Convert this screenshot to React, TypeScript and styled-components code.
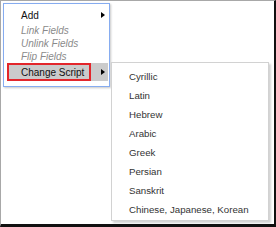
import styled, { createGlobalStyle } from "styled-components";

const GlobalStyle = createGlobalStyle`
  html, body {
    margin: 0;
    padding: 0;
    background: #fff;
  }
  body {
    font-family: "Liberation Sans", Arial, sans-serif;
  }
`;

const Frame = styled.div`
  box-sizing: border-box;
  width: 276px;
  height: 227px;
  border-style: solid;
  border-width: 1px 2px 3px 1px;
  border-color: #a8a8a8 #111 #111 #a8a8a8;
  padding: 2px 0 0 2px;
  display: flex;
  align-items: flex-start;
  gap: 1px;
  background: #fff;
`;

const Menu = styled.ul`
  box-sizing: border-box;
  list-style: none;
  margin: 0;
  width: 107px;
  padding: 2px 1px 5px 3px;
  border: 1px solid #86acf0;
  box-shadow: 1px 1px 2px rgba(0, 0, 0, 0.22);
  background: #fff;
`;

const Item = styled.li<{ $disabled?: boolean; $tall?: boolean; $active?: boolean }>`
  display: flex;
  align-items: center;
  justify-content: space-between;
  height: ${(p) => (p.$tall ? 18 : 13)}px;
  padding-left: ${(p) => (p.$active ? 0 : 14)}px;
  padding-right: 3px;
  font-size: 10px;
  font-style: ${(p) => (p.$disabled ? "italic" : "normal")};
  color: ${(p) => (p.$disabled ? "#8a8a8a" : "#111")};
  background: ${(p) => (p.$active ? "#cbcbcb" : "transparent")};
  white-space: nowrap;
`;

const Marked = styled.span`
  box-sizing: border-box;
  display: flex;
  align-items: center;
  width: 84px;
  height: 18px;
  padding-left: 12px;
  border: 2px solid #e3262b;
`;

const Arrow = styled.span`
  width: 0;
  height: 0;
  border-left: 4px solid #000;
  border-top: 3.5px solid transparent;
  border-bottom: 3.5px solid transparent;
`;

const SubMenu = styled.ul`
  box-sizing: border-box;
  list-style: none;
  margin: 59px 0 0;
  width: 158px;
  padding: 4px 0 1px;
  border: 1px solid #d2d2d2;
  box-shadow: 2px 2px 2px rgba(0, 0, 0, 0.18);
  background: #fff;
`;

const SubItem = styled.li`
  height: 19px;
  line-height: 19px;
  padding-left: 17px;
  font-size: 9.7px;
  color: #333;
  white-space: nowrap;
`;

const scripts = [
  "Cyrillic",
  "Latin",
  "Hebrew",
  "Arabic",
  "Greek",
  "Persian",
  "Sanskrit",
  "Chinese, Japanese, Korean",
];

export default function App() {
  return (
    <>
      <GlobalStyle />
      <Frame>
        <Menu>
          <Item $tall>
            <span>Add</span>
            <Arrow />
          </Item>
          <Item $disabled>Link Fields</Item>
          <Item $disabled>Unlink Fields</Item>
          <Item $disabled>Flip Fields</Item>
          <Item $tall $active>
            <Marked>Change Script</Marked>
            <Arrow />
          </Item>
        </Menu>
        <SubMenu>
          {scripts.map((s) => (
            <SubItem key={s}>{s}</SubItem>
          ))}
        </SubMenu>
      </Frame>
    </>
  );
}
